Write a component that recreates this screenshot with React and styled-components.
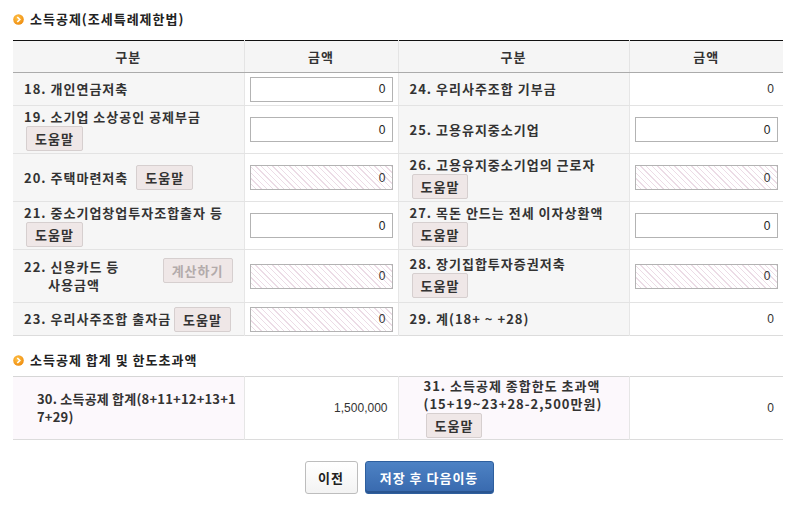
import React from "react";
import styled, { createGlobalStyle } from "styled-components";

const GlobalStyle = createGlobalStyle`
  body {
    margin: 0;
    background: #fff;
    font-family: "Noto Sans CJK KR", "Noto Sans", sans-serif;
    color: #333;
  }
`;

const Page = styled.div`
  width: 794px;
  padding: 9px 11px 0 13px;
  box-sizing: border-box;
`;

const SectionTitle = styled.h3`
  display: flex;
  align-items: center;
  gap: 6px;
  margin: ${props => props.top || 0}px 0 ${props => props.gap}px;
  font-size: 13px;
  font-weight: 700;
  letter-spacing: 1px;
  line-height: 20px;
  color: #222;
`;

const Table = styled.table`
  width: 770px;
  border-collapse: collapse;
  table-layout: fixed;
  border-top: 1px solid ${props => (props.dark ? "#111" : "#d6d6d6")};
  border-bottom: 1px solid #dcdcdc;
  font-size: 13px;
  font-weight: 700;
  letter-spacing: 1px;
`;

const Th = styled.th`
  height: 31px;
  padding: 0;
  background: #f5f5f5;
  border-bottom: 1px solid #ababab;
  border-left: 1px solid #e4e4e4;
  font-weight: 700;
  color: #333;
  text-align: center;
  &:first-child {
    border-left: none;
  }
`;

const Row = styled.tr`
  height: ${props => props.h}px;
  td {
    border-bottom: 1px solid #e3e3e3;
  }
  &:last-child td {
    border-bottom: none;
  }
`;

const Label = styled.td`
  padding: ${props => props.pt ?? 2}px ${props => props.pr ?? 8}px ${props => props.pb ?? 2}px ${props => props.indent || 11}px;
  background: ${props => (props.pink ? "#fcf8fc" : "#f6f6f6")};
  border-left: 1px solid #e6e6e6;
  line-height: 18px;
  letter-spacing: ${props => props.ls ?? 1}px;
  vertical-align: ${props => props.valign || "middle"};
  word-break: ${props => (props.breakAll ? "break-all" : "normal")};
  color: #333;
  &:first-child {
    border-left: none;
  }
`;

const Value = styled.td`
  padding: 0 ${props => props.pr || 5}px 0 5px;
  border-left: 1px solid #e6e6e6;
  text-align: right;
  font-family: "Liberation Sans", sans-serif;
  font-size: 12px;
  font-weight: 400;
  letter-spacing: 0;
  color: #333;
`;

const LabelLine = styled.div`
  display: flex;
  align-items: center;
  gap: ${props => props.gap || 8}px;
`;

const Amount = styled.input`
  box-sizing: border-box;
  width: 143px;
  height: 25px;
  margin: 0;
  padding: 0 6px;
  border: 1px solid #b3b3b3;
  font-family: "Liberation Sans", sans-serif;
  font-size: 12px;
  text-align: right;
  color: #222;
  background: ${props =>
    props.disabled
      ? "repeating-linear-gradient(45deg, #fff 0 3px, #ecdce6 3px 4px)"
      : "#fff"};
  &:disabled {
    color: #333;
  }
`;

const HelpButton = styled.button`
  box-sizing: border-box;
  height: 25px;
  padding: 0 ${props => props.px || 8}px;
  margin: ${props => props.m || "0"};
  border: 1px solid #d6cfcf;
  border-radius: 2px;
  background: #efe7e7;
  font-family: inherit;
  font-size: 13px;
  font-weight: 700;
  letter-spacing: 1px;
  color: #333;
  cursor: pointer;
  flex-shrink: 0;
`;

const CalcButton = styled(HelpButton)`
  color: #b3abab;
`;

const TwoLine = styled.div`
  display: grid;
  grid-template-columns: 1fr auto;
  align-items: center;
`;

const Indented = styled.div`
  padding-left: 24px;
`;

const Footer = styled.div`
  display: flex;
  justify-content: center;
  gap: 7px;
  margin: 21px 0 0 2px;
`;

const PrevButton = styled.button`
  height: 33px;
  width: 53px;
  border: 1px solid #bdbdbd;
  border-radius: 3px;
  background: linear-gradient(#fff, #f3f3f3);
  font-family: inherit;
  font-size: 13px;
  font-weight: 700;
  letter-spacing: 1px;
  color: #222;
`;

const SaveButton = styled.button`
  height: 33px;
  width: 129px;
  border: 1px solid #2e5f9e;
  border-radius: 3px;
  background: linear-gradient(#4d82c4, #3869ae);
  box-shadow: inset 0 -2px 0 #2a5590;
  font-family: inherit;
  font-size: 13px;
  font-weight: 700;
  letter-spacing: 1px;
  color: #fff;
`;

const Bullet = () => (
  <svg width="11" height="11" viewBox="0 0 11 11">
    <defs>
      <radialGradient id="bg" cx="0.4" cy="0.35" r="0.7">
        <stop offset="0" stopColor="#ffc247" />
        <stop offset="1" stopColor="#ee8a0c" />
      </radialGradient>
    </defs>
    <circle cx="5.5" cy="5.5" r="5.3" fill="url(#bg)" />
    <path d="M4.3 3 L6.8 5.5 L4.3 8" fill="none" stroke="#fff" strokeWidth="1.6" />
  </svg>
);

const Cols = () => (
  <colgroup>
    <col style={{ width: 231 }} />
    <col style={{ width: 154 }} />
    <col style={{ width: 231 }} />
    <col style={{ width: 154 }} />
  </colgroup>
);

const Help = () => (
  <div>
    <HelpButton m="0 0 0 2px">도움말</HelpButton>
  </div>
);

export default function App() {
  return (
    <Page>
      <GlobalStyle />
      <SectionTitle gap={11}>
        <Bullet />
        소득공제(조세특례제한법)
      </SectionTitle>
      <Table dark>
        <Cols />
        <thead>
          <tr>
            <Th>구분</Th>
            <Th>금액</Th>
            <Th>구분</Th>
            <Th>금액</Th>
          </tr>
        </thead>
        <tbody>
          <Row h={33}>
            <Label>18. 개인연금저축</Label>
            <Value><Amount defaultValue="0" /></Value>
            <Label>24. 우리사주조합 기부금</Label>
            <Value pr={9}>0</Value>
          </Row>
          <Row h={47}>
            <Label>
              19. 소기업 소상공인 공제부금
              <Help />
            </Label>
            <Value><Amount defaultValue="0" /></Value>
            <Label>25. 고용유지중소기업</Label>
            <Value pr={8}><Amount defaultValue="0" /></Value>
          </Row>
          <Row h={48}>
            <Label>
              <LabelLine>
                20. 주택마련저축
                <HelpButton>도움말</HelpButton>
              </LabelLine>
            </Label>
            <Value><Amount disabled defaultValue="0" /></Value>
            <Label>
              26. 고용유지중소기업의 근로자
              <Help />
            </Label>
            <Value pr={8}><Amount disabled defaultValue="0" /></Value>
          </Row>
          <Row h={48}>
            <Label pr={4}>
              21. 중소기업창업투자조합출자 등
              <Help />
            </Label>
            <Value><Amount defaultValue="0" /></Value>
            <Label>
              27. 목돈 안드는 전세 이자상환액
              <Help />
            </Label>
            <Value pr={8}><Amount defaultValue="0" /></Value>
          </Row>
          <Row h={53}>
            <Label pr={11}>
              <TwoLine>
                <div>
                  22. 신용카드 등
                  <Indented>사용금액</Indented>
                </div>
                <CalcButton m="-12px 0 0 0" disabled>계산하기</CalcButton>
              </TwoLine>
            </Label>
            <Value><Amount disabled defaultValue="0" /></Value>
            <Label>
              28. 장기집합투자증권저축
              <Help />
            </Label>
            <Value pr={8}><Amount disabled defaultValue="0" /></Value>
          </Row>
          <Row h={33}>
            <Label pr={2}>
              <LabelLine gap={3}>
                23. 우리사주조합 출자금
                <HelpButton>도움말</HelpButton>
              </LabelLine>
            </Label>
            <Value><Amount disabled defaultValue="0" /></Value>
            <Label>29. 계(18+ ~ +28)</Label>
            <Value pr={9}>0</Value>
          </Row>
        </tbody>
      </Table>

      <SectionTitle gap={6} top={14}>
        <Bullet />
        소득공제 합계 및 한도초과액
      </SectionTitle>
      <Table>
        <Cols />
        <tbody>
          <Row h={62}>
            <Label pink indent={24} pr={0} ls={0.2} breakAll>
              30. 소득공제 합계(8+11+12+13+17+29)
            </Label>
            <Value pr={10}>1,500,000</Value>
            <Label pink indent={25} valign="top" pt={0} pb={1}>
              31. 소득공제 종합한도 초과액
              <div>(15+19~23+28-2,500만원)</div>
              <Help />
            </Label>
            <Value pr={9}>0</Value>
          </Row>
        </tbody>
      </Table>

      <Footer>
        <PrevButton>이전</PrevButton>
        <SaveButton>저장 후 다음이동</SaveButton>
      </Footer>
    </Page>
  );
}
